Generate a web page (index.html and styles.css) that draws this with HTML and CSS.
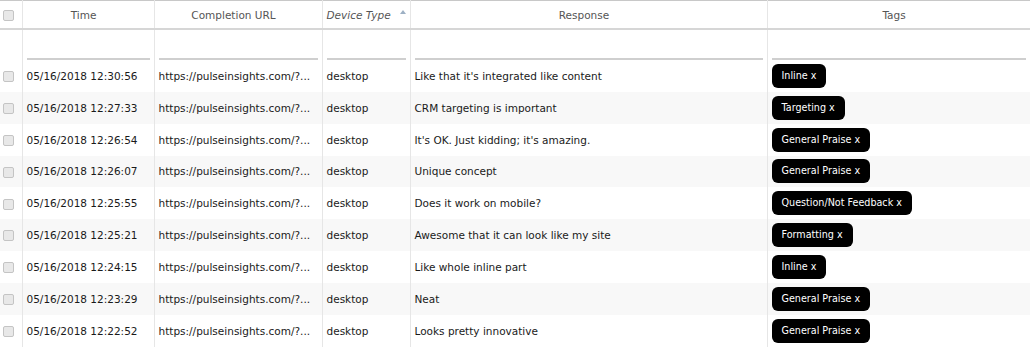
FILE: index.html
```html
<!DOCTYPE html>
<html lang="en">
<head>
  <meta charset="UTF-8">
  <meta name="viewport" content="width=device-width, initial-scale=1.0">
  <title>Responses</title>
  <link rel="stylesheet" href="styles.css">
</head>
<body>
  <table class="grid">
    <colgroup>
      <col class="col-check">
      <col class="col-time">
      <col class="col-url">
      <col class="col-device">
      <col class="col-response">
      <col class="col-tags">
    </colgroup>
    <thead>
      <tr class="head-row">
        <th><span class="check"></span></th>
        <th>Time</th>
        <th>Completion URL</th>
        <th class="sorted">Device Type<span class="sort-arrow"></span></th>
        <th>Response</th>
        <th>Tags</th>
      </tr>
      <tr class="filter-row">
        <th></th>
        <th><input class="filter" type="text"></th>
        <th><input class="filter" type="text"></th>
        <th><input class="filter" type="text"></th>
        <th><input class="filter" type="text"></th>
        <th><input class="filter" type="text"></th>
      </tr>
    </thead>
    <tbody>
      <tr>
        <td><span class="check"></span></td>
        <td>05/16/2018 12:30:56</td>
        <td>https://pulseinsights.com/?...</td>
        <td>desktop</td>
        <td>Like that it's integrated like content</td>
        <td><span class="tag">Inline x</span></td>
      </tr>
      <tr>
        <td><span class="check"></span></td>
        <td>05/16/2018 12:27:33</td>
        <td>https://pulseinsights.com/?...</td>
        <td>desktop</td>
        <td>CRM targeting is important</td>
        <td><span class="tag">Targeting x</span></td>
      </tr>
      <tr>
        <td><span class="check"></span></td>
        <td>05/16/2018 12:26:54</td>
        <td>https://pulseinsights.com/?...</td>
        <td>desktop</td>
        <td>It's OK. Just kidding; it's amazing.</td>
        <td><span class="tag">General Praise x</span></td>
      </tr>
      <tr>
        <td><span class="check"></span></td>
        <td>05/16/2018 12:26:07</td>
        <td>https://pulseinsights.com/?...</td>
        <td>desktop</td>
        <td>Unique concept</td>
        <td><span class="tag">General Praise x</span></td>
      </tr>
      <tr>
        <td><span class="check"></span></td>
        <td>05/16/2018 12:25:55</td>
        <td>https://pulseinsights.com/?...</td>
        <td>desktop</td>
        <td>Does it work on mobile?</td>
        <td><span class="tag">Question/Not Feedback x</span></td>
      </tr>
      <tr>
        <td><span class="check"></span></td>
        <td>05/16/2018 12:25:21</td>
        <td>https://pulseinsights.com/?...</td>
        <td>desktop</td>
        <td>Awesome that it can look like my site</td>
        <td><span class="tag">Formatting x</span></td>
      </tr>
      <tr>
        <td><span class="check"></span></td>
        <td>05/16/2018 12:24:15</td>
        <td>https://pulseinsights.com/?...</td>
        <td>desktop</td>
        <td>Like whole inline part</td>
        <td><span class="tag">Inline x</span></td>
      </tr>
      <tr>
        <td><span class="check"></span></td>
        <td>05/16/2018 12:23:29</td>
        <td>https://pulseinsights.com/?...</td>
        <td>desktop</td>
        <td>Neat</td>
        <td><span class="tag">General Praise x</span></td>
      </tr>
      <tr>
        <td><span class="check"></span></td>
        <td>05/16/2018 12:22:52</td>
        <td>https://pulseinsights.com/?...</td>
        <td>desktop</td>
        <td>Looks pretty innovative</td>
        <td><span class="tag">General Praise x</span></td>
      </tr>
    </tbody>
  </table>
</body>
</html>
```

FILE: styles.css
```css
body {
  margin: 0;
  background: #fff;
  font-family: "DejaVu Sans", Verdana, sans-serif;
  font-size: 10.5px;
  color: #1a1a1a;
}
.grid {
  width: 1030px;
  table-layout: fixed;
  border-collapse: collapse;
  border-top: 1px solid #c8c8c8;
  border-right: 1px solid #d4d4d4;
}
.col-check { width: 22px; }
.col-time { width: 132px; }
.col-url { width: 168px; }
.col-device { width: 88px; }
.col-response { width: 357px; }
.col-tags { width: 263px; }

.grid th,
.grid td {
  border-left: 1px solid #e6e6e6;
  padding: 0 4px;
  white-space: nowrap;
  overflow: hidden;
}
.grid th:first-child,
.grid td:first-child {
  border-left: none;
  padding: 0 0 0 3px;
  text-align: left;
}
.head-row th {
  height: 27px;
  padding-right: 13px;
  font-weight: normal;
  color: #555;
  border-bottom: 2px solid #d6d6d6;
  text-align: center;
}
.head-row th:first-child {
  vertical-align: top;
  padding-top: 7px;
  box-sizing: border-box;
}
.head-row .sorted {
  font-style: italic;
  padding-right: 4px;
}
.sort-arrow {
  display: inline-block;
  width: 0;
  height: 0;
  margin-left: 9px;
  vertical-align: 5px;
  border-left: 3px solid transparent;
  border-right: 3px solid transparent;
  border-bottom: 4px solid #9db0c4;
}
.filter-row th {
  height: 30px;
  vertical-align: bottom;
  padding-bottom: 0;
}
.filter {
  display: block;
  width: 100%;
  box-sizing: border-box;
  height: 16px;
  border: none;
  border-bottom: 2px solid #cfcfcf;
  background: transparent;
  outline: none;
}
.grid tbody td {
  height: 31.85px;
  padding-top: 0;
  padding-bottom: 0;
}
.grid tbody tr:nth-child(even) td {
  background: #f8f8f8;
}
.check {
  display: inline-block;
  width: 9px;
  height: 9px;
  border: 1px solid #c4c4c4;
  border-radius: 2px;
  background: #e8e8e8;
  vertical-align: middle;
}
.tag {
  display: inline-block;
  padding: 5px 10px 6px;
  font-size: 9.6px;
  line-height: 13px;
  border-radius: 6px;
  background: #000;
  color: #fff;
}
```
